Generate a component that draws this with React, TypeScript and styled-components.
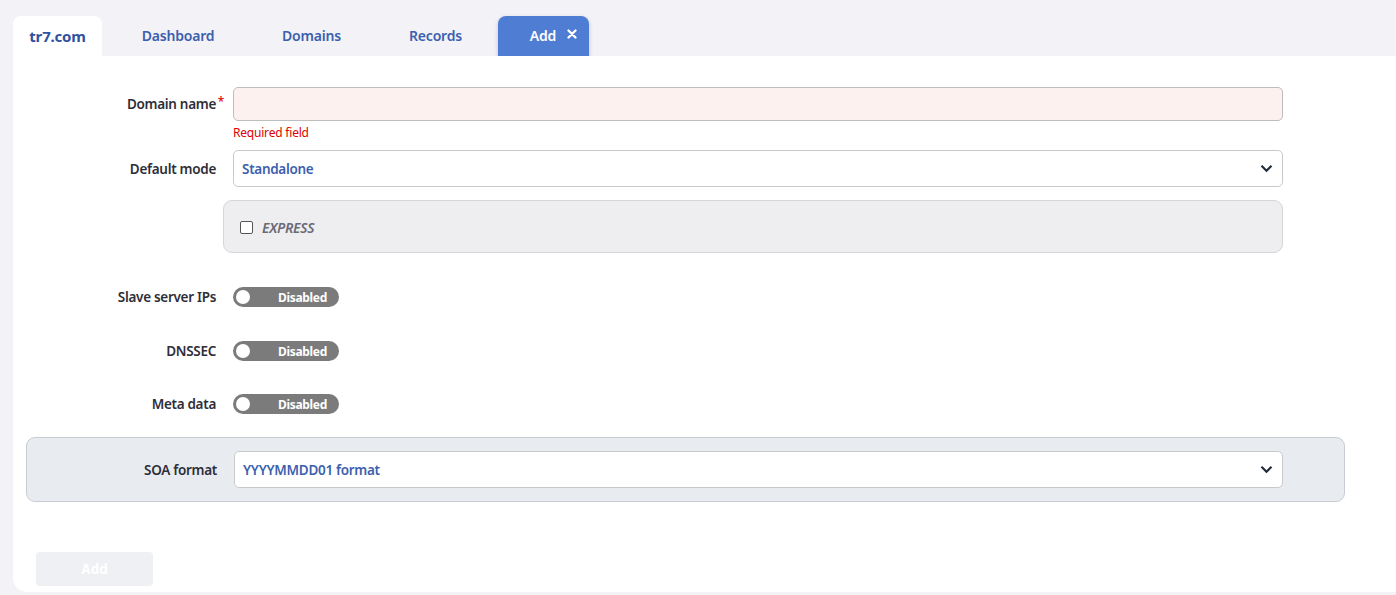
import React from "react";
import styled, { createGlobalStyle } from "styled-components";

const Global = createGlobalStyle`
  html, body { margin: 0; padding: 0; }
  body {
    background: #f2f2f7;
    font-family: "Noto Sans", "Open Sans", sans-serif;
    overflow: hidden;
  }
`;

const Page = styled.div`
  width: 1396px;
  height: 595px;
  padding: 16px 0 0 13px;
  box-sizing: border-box;
  display: flex;
  flex-direction: column;
`;

const TabBar = styled.div`
  display: flex;
  align-items: stretch;
  height: 40px;
  flex-shrink: 0;
`;

const Tab = styled.div<{ $w: number; $active?: boolean; $primary?: boolean; $shift?: number }>`
  width: ${(p) => p.$w}px;
  display: flex;
  align-items: center;
  justify-content: center;
  gap: 11px;
  font-size: 14px;
  font-weight: 600;
  letter-spacing: -0.2px;
  color: ${(p) => (p.$primary ? "#ffffff" : "#3d5fae")};
  background: ${(p) => (p.$active ? "#ffffff" : p.$primary ? "#4f7dd4" : "transparent")};
  border-radius: 8px 8px 0 0;
  box-shadow: ${(p) => (p.$primary ? "0 2px 4px rgba(40,60,120,0.25)" : "none")};
  padding: 0 0 2px ${(p) => p.$shift ?? 0}px;
  box-sizing: border-box;
`;

const Brand = styled.span`
  font-size: 15px;
  font-weight: 700;
  color: #2f52a0;
  padding-top: 2px;
`;

const Card = styled.div`
  flex: 1;
  background: #ffffff;
  border-radius: 0 0 0 14px;
  padding: 31px 0 0 0;
  display: flex;
  flex-direction: column;
  margin-bottom: 3px;
  min-height: 0;
`;

const Row = styled.div<{ $mt?: number }>`
  display: grid;
  grid-template-columns: 203px 1050px;
  column-gap: 17px;
  align-items: start;
  margin-top: ${(p) => p.$mt ?? 0}px;
`;

const Label = styled.div<{ $h: number }>`
  height: ${(p) => p.$h}px;
  display: flex;
  align-items: center;
  justify-content: flex-end;
  font-size: 13.5px;
  font-weight: 600;
  color: #2e2e38;
  letter-spacing: -0.3px;
  position: relative;
`;

const Star = styled.span`
  position: absolute;
  right: -8px;
  top: 6px;
  color: #e0201a;
  font-size: 12px;
`;

const Field = styled.div`
  display: flex;
  flex-direction: column;
`;

const TextInput = styled.div`
  height: 34px;
  box-sizing: border-box;
  border: 1px solid #bdbdbd;
  border-radius: 5px;
  background: #fcf1ee;
`;

const Error = styled.div`
  color: #e00000;
  font-size: 12px;
  margin-top: 3px;
  letter-spacing: -0.2px;
`;

const Select = styled.div`
  height: 37px;
  box-sizing: border-box;
  border: 1px solid #c9c9c9;
  border-radius: 5px;
  background: #ffffff;
  display: flex;
  align-items: center;
  justify-content: space-between;
  padding: 0 9px 0 8px;
  color: #3d5fae;
  font-size: 13.5px;
  font-weight: 600;
  letter-spacing: -0.3px;
`;

const ExpressBox = styled.div`
  margin: 13px 0 0 210px;
  width: 1060px;
  height: 53px;
  box-sizing: border-box;
  background: #eeeef1;
  border: 1px solid #d6d6d9;
  border-radius: 9px;
  display: flex;
  align-items: center;
  padding: 2px 0 0 16px;
  gap: 9px;
`;

const Check = styled.span`
  width: 13px;
  height: 13px;
  box-sizing: border-box;
  border: 1.4px solid #555;
  border-radius: 2px;
  background: #fff;
  display: inline-block;
`;

const ExpressText = styled.span`
  font-style: italic;
  font-weight: 600;
  color: #6a6a75;
  font-size: 14px;
  letter-spacing: -0.3px;
`;

const ToggleRow = styled.div<{ $mt: number }>`
  display: grid;
  grid-template-columns: 203px auto;
  column-gap: 17px;
  align-items: center;
  margin-top: ${(p) => p.$mt}px;
  height: 20px;
`;

const Toggle = styled.div`
  width: 106px;
  height: 20px;
  border-radius: 10px;
  background: #7b7b7b;
  display: flex;
  align-items: center;
  padding: 0 12px 0 3px;
  box-sizing: border-box;
  justify-content: space-between;
`;

const Knob = styled.span`
  width: 14px;
  height: 14px;
  border-radius: 50%;
  background: #ffffff;
`;

const ToggleText = styled.span`
  color: #ffffff;
  font-size: 12px;
  font-weight: 700;
  letter-spacing: -0.3px;
`;

const SoaPanel = styled.div`
  margin: 23px 0 0 13px;
  width: 1319px;
  height: 65px;
  box-sizing: border-box;
  background: #e8ecf0;
  border: 1px solid #c7ccd3;
  border-radius: 9px;
  display: grid;
  grid-template-columns: 190px 1049px;
  column-gap: 17px;
  align-items: center;
`;

const SubmitButton = styled.div`
  margin: 50px 0 0 23px;
  width: 117px;
  height: 34px;
  border-radius: 4px;
  background: #eef0f3;
  color: #ffffff;
  font-weight: 700;
  font-size: 13.5px;
  display: flex;
  align-items: center;
  justify-content: center;
`;

const Chevron = () => (
  <svg width="13" height="9" viewBox="0 0 13 9">
    <path d="M1.5 1.8 L6.5 6.8 L11.5 1.8" fill="none" stroke="#1f2a3a" strokeWidth="2.2" />
  </svg>
);

const Close = () => (
  <svg width="10" height="10" viewBox="0 0 10 10" style={{ marginTop: -3 }}>
    <path d="M1.5 1.5 L8.5 8.5 M8.5 1.5 L1.5 8.5" stroke="#fff" strokeWidth="2.3" strokeLinecap="round" />
  </svg>
);

export default function App() {
  return (
    <>
      <Global />
      <Page>
        <TabBar>
          <Tab $w={89} $active>
            <Brand>tr7.com</Brand>
          </Tab>
          <Tab $w={152}>Dashboard</Tab>
          <Tab $w={115}>Domains</Tab>
          <Tab $w={129} $shift={4}>Records</Tab>
          <Tab $w={91} $primary $shift={20}>
            <span>Add</span>
            <Close />
          </Tab>
        </TabBar>
        <Card>
          <Row>
            <Label $h={34}>
              Domain name<Star>*</Star>
            </Label>
            <Field>
              <TextInput />
              <Error>Required field</Error>
            </Field>
          </Row>
          <Row $mt={9}>
            <Label $h={37}>Default mode</Label>
            <Select>
              <span>Standalone</span>
              <Chevron />
            </Select>
          </Row>
          <ExpressBox>
            <Check />
            <ExpressText>EXPRESS</ExpressText>
          </ExpressBox>
          <ToggleRow $mt={34}>
            <Label $h={20}>Slave server IPs</Label>
            <Toggle>
              <Knob />
              <ToggleText>Disabled</ToggleText>
            </Toggle>
          </ToggleRow>
          <ToggleRow $mt={34}>
            <Label $h={20}>DNSSEC</Label>
            <Toggle>
              <Knob />
              <ToggleText>Disabled</ToggleText>
            </Toggle>
          </ToggleRow>
          <ToggleRow $mt={33}>
            <Label $h={20}>Meta data</Label>
            <Toggle>
              <Knob />
              <ToggleText>Disabled</ToggleText>
            </Toggle>
          </ToggleRow>
          <SoaPanel>
            <Label $h={37}>SOA format</Label>
            <Select>
              <span>YYYYMMDD01 format</span>
              <Chevron />
            </Select>
          </SoaPanel>
          <SubmitButton>Add</SubmitButton>
        </Card>
      </Page>
    </>
  );
}
